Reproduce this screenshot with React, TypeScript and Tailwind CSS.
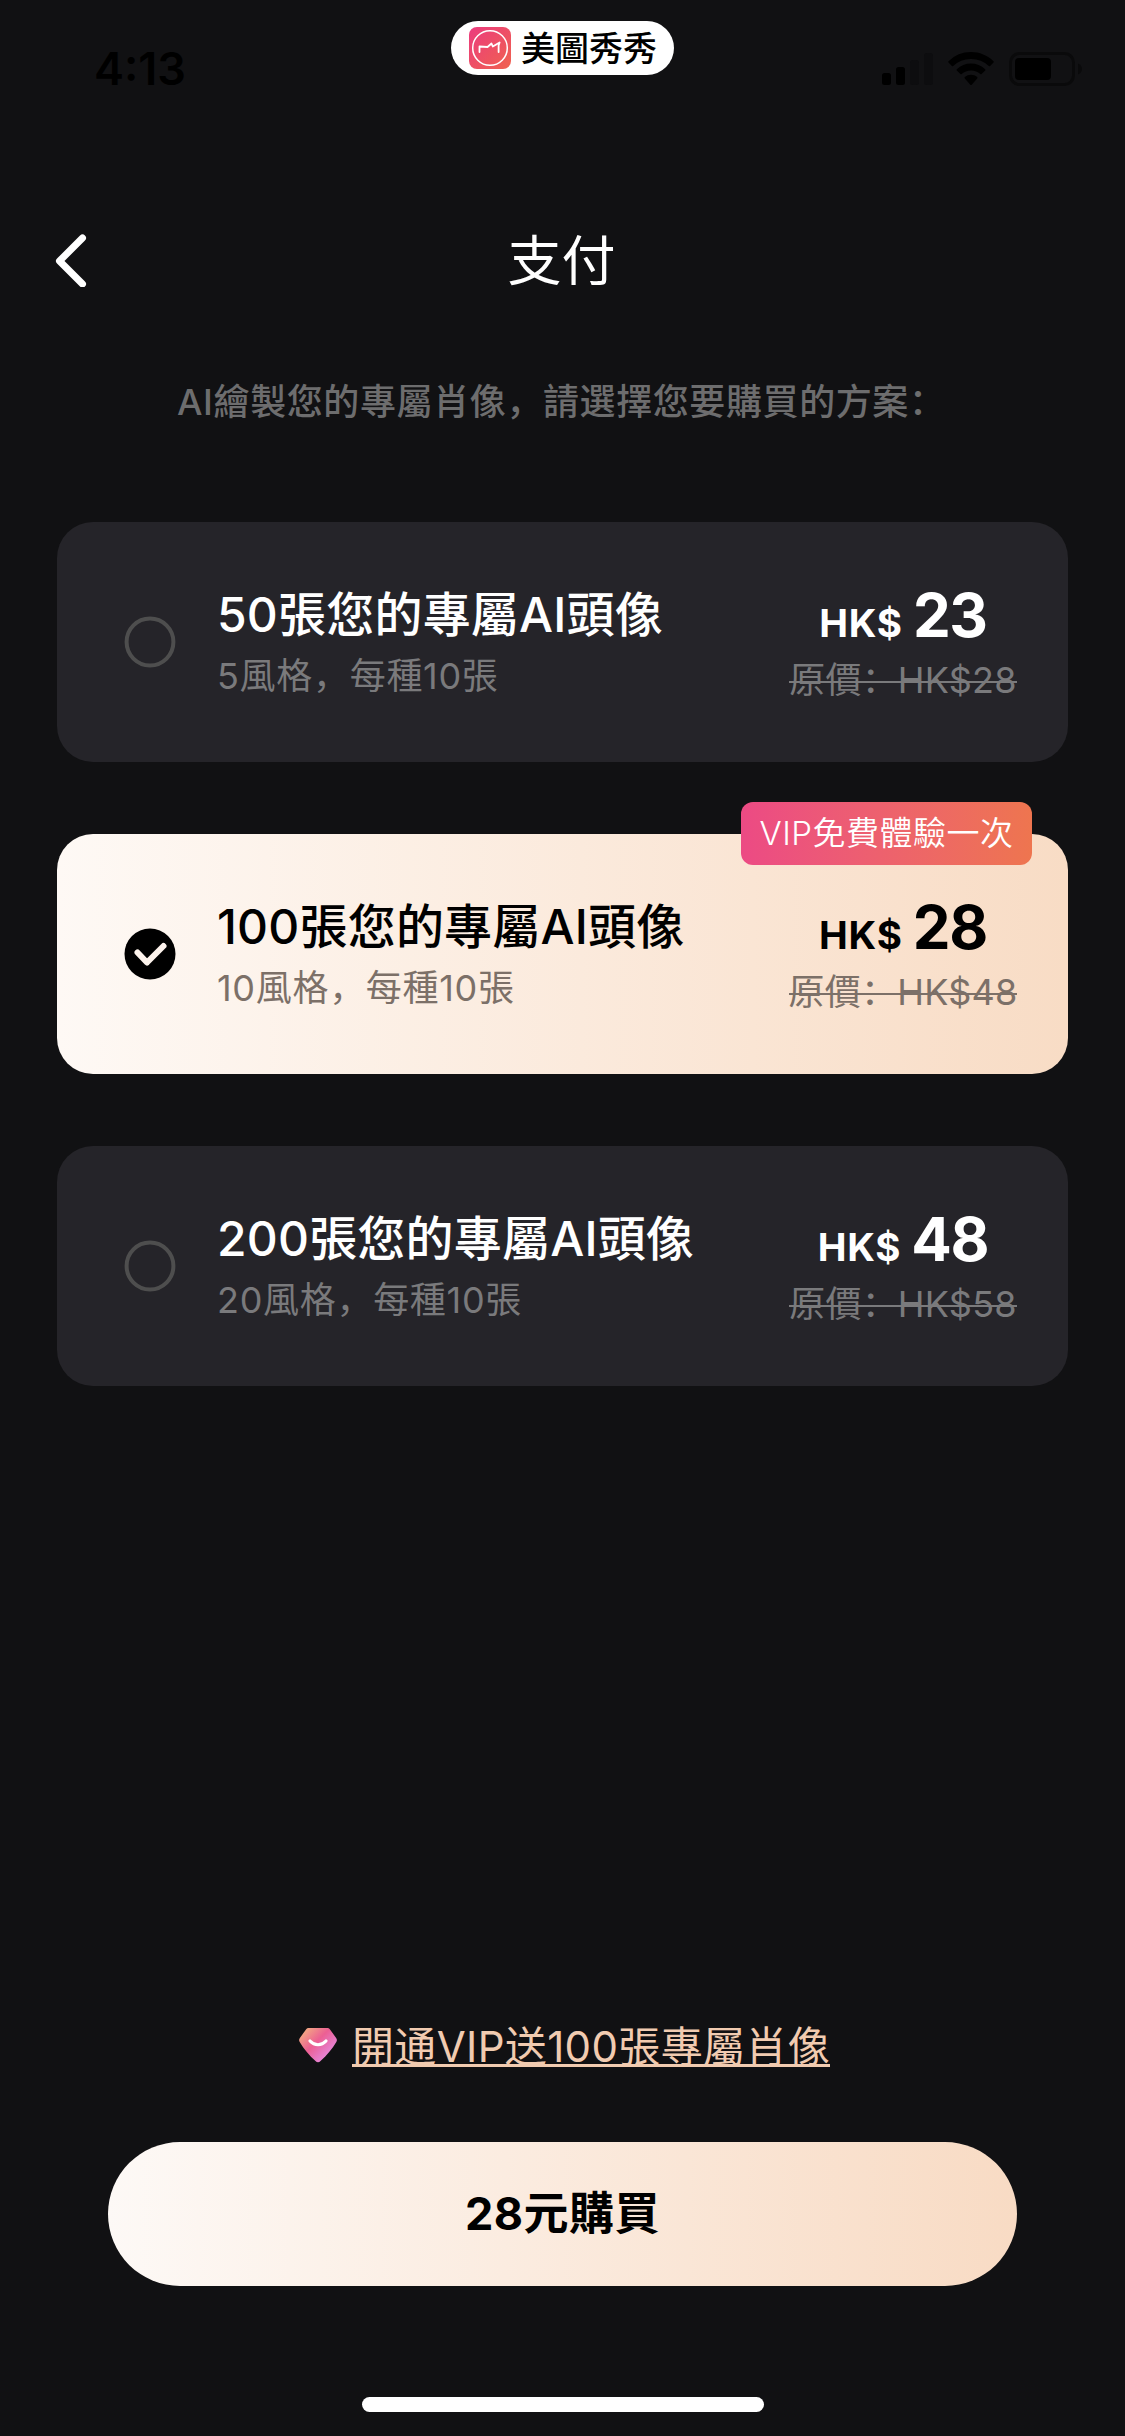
type Plan = {
  title: string;
  detail: string;
  price: string;
  original: string;
  badge?: string;
};

const plans: Plan[] = [
  { title: '50張您的專屬AI頭像', detail: '5風格，每種10張', price: '23', original: '原價：HK$28' },
  {
    title: '100張您的專屬AI頭像',
    detail: '10風格，每種10張',
    price: '28',
    original: '原價：HK$48',
    badge: 'VIP免費體驗一次',
  },
  { title: '200張您的專屬AI頭像', detail: '20風格，每種10張', price: '48', original: '原價：HK$58' },
];

function AppLogo() {
  return (
    <svg className="h-[42px] w-[42px]" viewBox="0 0 42 42" fill="none">
      <defs>
        <linearGradient id="logo" x1="0" y1="0" x2="1" y2="1">
          <stop offset="0" stopColor="#eb3b7e" />
          <stop offset="1" stopColor="#f0624f" />
        </linearGradient>
      </defs>
      <rect width="42" height="42" rx="8" fill="url(#logo)" />
      <circle cx="21" cy="21" r="17.3" stroke="#fff" strokeWidth="1.5" />
      <path
        d="M10.500 25v-5.500L18.500 20l4-3.500 1.300 3 6.800-4-1 3v6.500"
        stroke="#fff"
        strokeWidth="1.800"
        strokeLinejoin="round"
        strokeLinecap="round"
      />
    </svg>
  );
}

function StatusIcons() {
  return (
    <div className="mt-[52px] flex h-[34px] items-center">
      <svg className="h-[34px] w-[51px]" viewBox="0 0 51 34">
        <rect x="0" y="21" width="9" height="12" rx="2.500" fill="#000" />
        <rect x="14" y="15" width="9" height="18" rx="2.500" fill="#000" />
        <rect x="28" y="8" width="9" height="25" rx="2.500" fill="#0d0d0f" />
        <rect x="42" y="1" width="9" height="32" rx="2.500" fill="#0d0d0f" />
      </svg>
      <svg className="ml-[15px] h-[34px] w-[46px]" viewBox="0 0 46 34">
        <path
          d="M23 0C31.500 0 39.500 3.300 45.500 9.200c.4.4.4.9 0 1.300l-3.400 3.500c-.4.4-.9.4-1.300 0A25.500 25.500 0 0 0 23 7 25.500 25.500 0 0 0 5.200 14c-.4.4-.9.4-1.300 0L.5 10.500c-.4-.4-.4-.9 0-1.300A32 32 0 0 1 23 0Z"
          fill="#000"
        />
        <path
          d="M23 11.500c5.300 0 10.300 2 14.200 5.700.4.400.4.900 0 1.300l-3.600 3.500c-.4.4-.9.4-1.300 0A13.700 13.700 0 0 0 23 18.500c-3.500 0-6.800 1.300-9.300 3.500-.4.400-.9.400-1.300 0l-3.600-3.500c-.4-.4-.4-.9 0-1.300A20.500 20.500 0 0 1 23 11.500Z"
          fill="#000"
        />
        <path
          d="M23 22.800c2.300 0 4.500.8 6.200 2.300.4.400.4.900 0 1.300L23.700 32.700c-.4.400-1 .4-1.400 0L16.800 26.400c-.4-.4-.4-.9 0-1.300a9.300 9.300 0 0 1 6.200-2.300Z"
          fill="#000"
        />
      </svg>
      <svg className="ml-[15px] h-[34px] w-[74px]" viewBox="0 0 74 34" fill="none">
        <rect x="1.500" y="1.500" width="63" height="31" rx="9" stroke="#0a0a0b" strokeWidth="3" />
        <rect x="6" y="6" width="36" height="22" rx="4" fill="#000" />
        <path d="M69 11.500c2.500 1 4 3.100 4 5.500s-1.500 4.500-4 5.500Z" fill="#0a0a0b" />
      </svg>
    </div>
  );
}

function Radio({ checked }: { checked: boolean }) {
  return (
    <svg className="h-[52px] w-[52px]" viewBox="0 0 52 52" fill="none">
      {checked ? (
        <>
          <circle cx="26" cy="26" r="25.500" fill="#000" />
          <path
            d="M13.500 24.500 23 34.500 39.500 18"
            stroke="#fdf3ec"
            strokeWidth="6"
            strokeLinecap="round"
            strokeLinejoin="round"
          />
        </>
      ) : (
        <circle cx="26" cy="26" r="23.400" stroke="#4e4e4e" strokeWidth="4" />
      )}
    </svg>
  );
}

function PlanCard({ plan, selected }: { plan: Plan; selected: boolean }) {
  return (
    <div
      className={
        selected
          ? 'relative flex h-[240px] rounded-[36px] bg-linear-to-r from-[#fef9f5] to-[#f8dcc5] text-black'
          : 'relative flex h-[240px] rounded-[36px] bg-[#252429] text-white'
      }
    >
      <div className="ml-[67px] flex items-center">
        <Radio checked={selected} />
      </div>
      <div className="ml-[41px] flex-1 pt-[63px] whitespace-nowrap">
        <div className="text-[48px] leading-[60px] font-medium tracking-[0.2px]">{plan.title}</div>
        <div
          className={
            selected
              ? 'text-[36px] leading-[63px] tracking-[0.7px] text-[#7c7068]'
              : 'text-[36px] leading-[63px] tracking-[0.7px] text-[#7a7a7c]'
          }
        >
          {plan.detail}
        </div>
      </div>
      <div className="mr-[51px] flex w-[228px] flex-col items-center pt-[63px] whitespace-nowrap">
        <div className="flex h-[60px] items-baseline gap-[10px] leading-[60px]">
          <span className="text-[38.5px] font-bold tracking-[0.8px]">HK$</span>
          <span className="text-[60px] font-bold tracking-[-1.3px]">{plan.price}</span>
        </div>
        <div
          className={
            selected
              ? 'relative text-[36px] leading-[70px] tracking-[0.2px] text-[#7c7068]'
              : 'relative text-[36px] leading-[70px] tracking-[0.2px] text-[#7a7a7c]'
          }
        >
          {plan.original}
          <span className="absolute inset-x-0 top-[36px] h-[2px] bg-current" />
        </div>
      </div>
      {plan.badge && (
        <div className="absolute -top-8 right-9 flex h-[63px] w-[291px] items-center justify-center rounded-xl bg-linear-to-r from-[#ec4a84] to-[#ee754f] text-[33px] font-[350] tracking-[0.5px] whitespace-nowrap text-white">
          {plan.badge}
        </div>
      )}
    </div>
  );
}

function Gem() {
  return (
    <svg className="mt-[2px] h-[36px] w-[38px]" viewBox="0 0 38 36" fill="none">
      <defs>
        <linearGradient id="gem" x1="4" y1="4" x2="30" y2="30" gradientUnits="userSpaceOnUse">
          <stop offset="0" stopColor="#f3a683" />
          <stop offset="0.45" stopColor="#ec5f93" />
          <stop offset="0.7" stopColor="#e873b8" />
          <stop offset="1" stopColor="#e98ae0" />
        </linearGradient>
      </defs>
      <path
        d="M10 0h18c1.200 0 2.200.5 3 1.400l6.300 8.800c.8 1.200.8 2.500 0 3.700-4.200 7-9.500 13.500-15.800 19.200-1.500 1.600-3.500 1.600-5 0C10.200 27.400 4.900 20.900.7 13.900c-.8-1.200-.8-2.500 0-3.700L7 1.400C7.800.5 8.800 0 10 0Z"
        fill="url(#gem)"
      />
      <path d="M11 13c4.500 5 11.500 5 16 0" stroke="#fff" strokeWidth="3.200" strokeLinecap="round" />
    </svg>
  );
}

export default function App() {
  return (
    <div className="flex h-[2436px] w-[1125px] flex-col overflow-hidden bg-[#111113] font-['Inter','Noto_Sans_CJK_SC',sans-serif] text-white">
      <header className="grid h-[210px] grid-cols-3">
        <div className="pt-[39px] pl-[94px] text-[45px] leading-[60px] font-semibold text-black">4:13</div>
        <div className="flex justify-center">
          <div className="mt-[21px] flex h-[54px] w-[223px] items-center rounded-full bg-white pl-[18px]">
            <AppLogo />
            <span className="ml-[10px] text-[34px] leading-[55px] font-medium whitespace-nowrap text-black">
              美圖秀秀
            </span>
          </div>
        </div>
        <div className="flex justify-end pr-[42px]">
          <StatusIcons />
        </div>
      </header>

      <nav className="grid h-[100px] grid-cols-3 items-center">
        <svg className="ml-[55px] h-[54px] w-[32px]" viewBox="0 0 32 54" fill="none">
          <path d="M27.500 5 4.500 28 27.500 51" stroke="#fff" strokeWidth="7" strokeLinecap="round" strokeLinejoin="round" />
        </svg>
        <h1 className="pt-[3px] pr-[2px] text-center text-[54px] leading-[80px]">支付</h1>
      </nav>

      <p className="mt-[60px] pl-[177px] text-[36px] leading-[64px] font-medium tracking-[0.6px] whitespace-nowrap text-[#6d6d6e]">
        AI繪製您的專屬肖像，請選擇您要購買的方案：
      </p>

      <main className="mx-[57px] mt-[88px] flex flex-col gap-[72px]">
        {plans.map((plan) => (
          <PlanCard key={plan.price} plan={plan} selected={Boolean(plan.badge)} />
        ))}
      </main>

      <footer className="mt-auto flex flex-col items-center">
        <a className="flex items-center gap-[15px] pl-[4px] text-[#f1cbb0]">
          <Gem />
          <span className="h-[44px] border-b-[3px] border-[#f1cbb0] text-[42px] leading-[47px] tracking-[0.35px] whitespace-nowrap">
            開通VIP送100張專屬肖像
          </span>
        </a>
        <button className="mt-[75px] h-[144px] w-[909px] rounded-full bg-linear-to-r from-[#fdf9f6] to-[#f8dbc4] text-[45px] font-bold tracking-[0.5px] text-black">
          28元購買
        </button>
        <div className="mt-[111px] mb-6 h-[15px] w-[402px] rounded-full bg-white" />
      </footer>
    </div>
  );
}
